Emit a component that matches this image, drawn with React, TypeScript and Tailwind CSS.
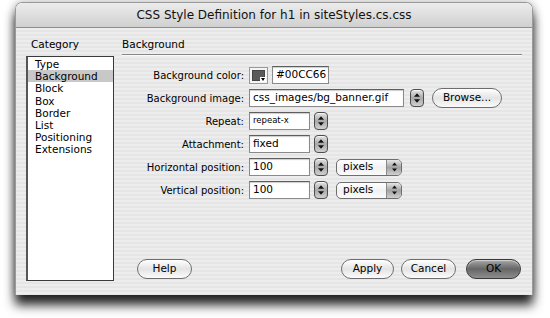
import React from "react";

const categories = ["Type", "Background", "Block", "Box", "Border", "List", "Positioning", "Extensions"];

function Arrows({ size = 7 }: { size?: number }) {
  return (
    <div className="flex flex-col items-center gap-[2px]">
      <svg width={size} height="4" viewBox="0 0 7 4">
        <path d="M0 4 L3.5 0 L7 4Z" fill="#111" />
      </svg>
      <svg width={size} height="4" viewBox="0 0 7 4">
        <path d="M0 0 L3.5 4 L7 0Z" fill="#111" />
      </svg>
    </div>
  );
}

function Stepper() {
  return (
    <div className="w-[14px] h-[18px] rounded-[4px] border border-[#4d4d4d] bg-linear-to-b from-[#e4e4e4] via-[#a9a9a9] to-[#d0d0d0] flex items-center justify-center shadow-[inset_0_1px_0_rgba(255,255,255,0.7)]">
      <Arrows size={6} />
    </div>
  );
}

function TextInput({ value, width, small }: { value: string; width: string; small?: boolean }) {
  return (
    <div
      className={`${width} h-[18px] bg-white border border-[#8a8a8a] border-t-[#5e5e5e] shadow-[inset_0_1px_1px_rgba(0,0,0,0.2)] pl-[3px] flex ${small ? "items-start pt-[1px] text-[8.5px]" : "items-center text-[10.5px]"} text-black whitespace-nowrap overflow-hidden`}
    >
      {value}
    </div>
  );
}

function Select({ value }: { value: string }) {
  return (
    <div className="w-[66px] h-[17px] rounded-[5px] border border-[#6e6e6e] bg-linear-to-b from-white via-[#f1f1f1] to-[#fbfbfb] flex items-stretch overflow-hidden">
      <div className="flex-1 flex items-center pl-[6px] text-[10.5px]">{value}</div>
      <div className="w-[15px] border-l border-[#8a8a8a] bg-linear-to-b from-[#e6e6e6] via-[#a3a3a3] to-[#cfcfcf] flex items-center justify-center">
        <Arrows size={5} />
      </div>
    </div>
  );
}

function PillButton({ label, width, primary }: { label: string; width: string; primary?: boolean }) {
  return (
    <div
      className={`${width} h-[20px] rounded-full border flex items-center justify-center text-[10.5px] text-black ${
        primary
          ? "border-[#3a3a3a] bg-linear-to-b from-[#a8a8a8] via-[#666] to-[#8e8e8e] shadow-[inset_0_1px_1px_rgba(255,255,255,0.5)]"
          : "border-[#6d6d6d] bg-linear-to-b from-white via-[#e4e4e4] to-[#fbfbfb] shadow-[inset_0_1px_1px_rgba(255,255,255,0.9)]"
      }`}
    >
      {label}
    </div>
  );
}

function ColorSwatch() {
  return (
    <div className="relative w-[19px] h-[17px] border border-[#9a9a9a] bg-[#f4f4f4] p-[2px]">
      <div className="w-full h-full bg-[#5a5a5a] border border-[#444]" />
      <div className="absolute right-[1px] bottom-[1px] w-[6px] h-[5px] bg-white flex items-center justify-center">
        <svg width="4" height="3" viewBox="0 0 4 3">
          <path d="M0 0 L2 3 L4 0Z" fill="#000" />
        </svg>
      </div>
    </div>
  );
}

export default function App() {
  return (
    <div className="w-[550px] h-[318px] bg-white overflow-hidden font-['DejaVu_Sans',sans-serif] text-black">
      <div className="ml-[15px] mt-[2px] w-[518px] h-[293px] flex flex-col rounded-t-[7px] border-x border-t border-[#9a9a9a] shadow-[0_10px_11px_rgba(0,0,0,0.85),0_0_10px_rgba(0,0,0,0.3)] overflow-hidden">
        {/* Title bar */}
        <div className="h-[25px] shrink-0 flex items-center justify-center border-b border-[#8e8e8e] bg-linear-to-b from-[#ececec] to-[#d0d0d0] text-[12px] text-[#111]">
          CSS Style Definition for h1 in siteStyles.cs.css
        </div>

        {/* Body */}
        <div className="flex-1 flex pl-[10px] pr-[10px] pb-[14px] bg-[repeating-linear-gradient(180deg,#ededed_0px,#ededed_2px,#e5e5e5_2px,#e5e5e5_4px)]">
          {/* Category column */}
          <div className="w-[88px] flex flex-col">
            <div className="pt-[10px] pb-[6px] pl-[5px] leading-[12px] text-[10.5px]">Category</div>
            <div className="flex-1 bg-white border border-[#3a3a3a] border-l-2 border-l-[#555] pt-px">
              {categories.map((c) => (
                <div
                  key={c}
                  className={`pl-[7px] leading-[12.2px] text-[10.5px] ${c === "Background" ? "bg-[#c8c8c8]" : ""}`}
                >
                  {c}
                </div>
              ))}
            </div>
          </div>

          {/* Panel column */}
          <div className="flex-1 ml-[8px] flex flex-col pb-[2px]">
            <div className="pt-[10px] leading-[12px] text-[10.5px]">Background</div>
            <div className="mt-[4px] h-px bg-[#878787] shadow-[0_1px_0_#fafafa]" />

            <div className="mt-[11px] grid grid-cols-[122px_1fr] gap-x-[5px] gap-y-[5px] text-[10px]">
              <div className="h-[18px] flex items-center justify-end">Background color:</div>
              <div className="h-[18px] flex items-center gap-[4px]">
                <ColorSwatch />
                <TextInput value="#00CC66" width="w-[57px]" />
              </div>

              <div className="h-[18px] flex items-center justify-end">Background image:</div>
              <div className="h-[18px] flex items-center">
                <TextInput value="css_images/bg_banner.gif" width="w-[155px]" />
                <div className="ml-[6px]">
                  <Stepper />
                </div>
                <div className="ml-[8px]">
                  <PillButton label="Browse..." width="w-[70px]" />
                </div>
              </div>

              <div className="h-[18px] flex items-center justify-end">Repeat:</div>
              <div className="h-[18px] flex items-center gap-[4px]">
                <TextInput value="repeat-x" width="w-[61px]" small />
                <Stepper />
              </div>

              <div className="h-[18px] flex items-center justify-end">Attachment:</div>
              <div className="h-[18px] flex items-center gap-[4px]">
                <TextInput value="fixed" width="w-[61px]" />
                <Stepper />
              </div>

              <div className="h-[18px] flex items-center justify-end">Horizontal position:</div>
              <div className="h-[18px] flex items-center">
                <TextInput value="100" width="w-[61px]" />
                <div className="ml-[4px]">
                  <Stepper />
                </div>
                <div className="ml-[8px]">
                  <Select value="pixels" />
                </div>
              </div>

              <div className="h-[18px] flex items-center justify-end">Vertical position:</div>
              <div className="h-[18px] flex items-center">
                <TextInput value="100" width="w-[61px]" />
                <div className="ml-[4px]">
                  <Stepper />
                </div>
                <div className="ml-[8px]">
                  <Select value="pixels" />
                </div>
              </div>
            </div>

            {/* Buttons */}
            <div className="mt-auto flex items-center">
              <div className="ml-[15px]">
                <PillButton label="Help" width="w-[55px]" />
              </div>
              <div className="ml-auto flex items-center mr-px">
                <PillButton label="Apply" width="w-[53px]" />
                <div className="ml-[7px]">
                  <PillButton label="Cancel" width="w-[55px]" />
                </div>
                <div className="ml-[10px]">
                  <PillButton label="OK" width="w-[55px]" primary />
                </div>
              </div>
            </div>
          </div>
        </div>
      </div>
    </div>
  );
}
